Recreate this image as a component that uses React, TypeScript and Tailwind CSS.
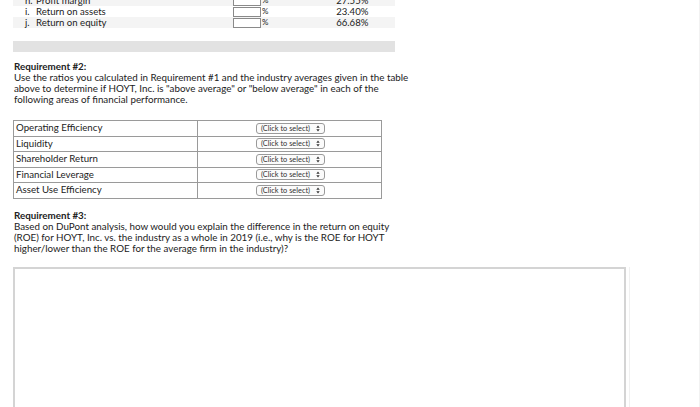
import React from "react";

const topRows = [
  { label: "h.", name: "Profit margin", value: "27.55%", bg: "bg-[#f4f4f4]" },
  { label: "i.", name: "Return on assets", value: "23.40%", bg: "bg-white" },
  { label: "j.", name: "Return on equity", value: "66.68%", bg: "bg-[#f4f4f4]" },
];

const areas = [
  "Operating Efficiency",
  "Liquidity",
  "Shareholder Return",
  "Financial Leverage",
  "Asset Use Efficiency",
];

function SelectBox() {
  return (
    <div className="flex h-[11px] w-[69px] items-center rounded-[3px] border border-[#9a9a9a] bg-[#fbfbfb] pl-[4px] pr-[4px] text-[7.4px] leading-none text-[#333]">
      <span className="flex-1">(Click to select)</span>
      <svg width="4" height="7" viewBox="0 0 4 7">
        <path d="M0.3 2.8 L2 0.6 L3.7 2.8 Z" fill="#333" />
        <path d="M0.3 4.2 L2 6.4 L3.7 4.2 Z" fill="#333" />
      </svg>
    </div>
  );
}

export default function App() {
  return (
    <div
      className="relative h-[407px] w-[700px] overflow-hidden bg-white text-[#222]"
      style={{ fontFamily: "Lato, 'Open Sans', sans-serif" }}
    >
      <div className="mt-[-5px] ml-[13px] w-[382px] text-[9.6px] leading-[11px]">
        {topRows.map((r) => (
          <div key={r.label} className={`flex h-[11px] items-center ${r.bg}`}>
            <span className="ml-[12px] w-[11px]">{r.label}</span>
            <span className="w-[197px]">{r.name}</span>
            <span className="flex items-center">
              <span className="h-[10px] w-[28px] border border-[#8a8a8a] bg-white" />
              <span className="ml-[1px] text-[8px]">%</span>
            </span>
            <span className="w-[100px] text-right">{r.value}</span>
          </div>
        ))}
      </div>

      <div className="mt-[13px] ml-[13px] h-[11px] w-[382px] bg-[#e2e2e2]" />

      <div className="mt-[9px] ml-[14px] w-[430px] text-[9.8px] leading-[11px]">
        <div className="font-bold">Requirement #2:</div>
        <div>
          Use the ratios you calculated in Requirement #1 and the industry averages given in the table
          <br />
          above to determine if HOYT, Inc. is "above average" or "below average" in each of the
          <br />
          following areas of financial performance.
        </div>
      </div>

      <table className="mt-[15px] ml-[13px] w-[369px] border-collapse border border-[#9a9a9a] text-[9.7px]">
        <tbody>
          {areas.map((a) => (
            <tr key={a} className="h-[15.5px]">
              <td className="w-[184px] border border-[#9a9a9a] pl-[2px] leading-none">{a}</td>
              <td className="border border-[#9a9a9a]">
                <div className="flex justify-center pl-[2px]">
                  <SelectBox />
                </div>
              </td>
            </tr>
          ))}
        </tbody>
      </table>

      <div className="mt-[11px] ml-[14px] w-[430px] text-[9.8px] leading-[11px]">
        <div className="font-bold">Requirement #3:</div>
        <div>
          Based on DuPont analysis, how would you explain the difference in the return on equity
          <br />
          (ROE) for HOYT, Inc. vs. the industry as a whole in 2019 (i.e., why is the ROE for HOYT
          <br />
          higher/lower than the ROE for the average firm in the industry)?
        </div>
      </div>

      <div className="mt-[13px] ml-[13px] flex">
        <div className="h-[160px] w-[613px] border-2 border-b-0 border-[#d4d4d4]" />
        <div className="ml-[3px] h-[160px] w-px bg-[#f0f0f0]" />
      </div>

      <div className="absolute top-0 right-0 h-full w-px bg-[#f2f2f2]" />
    </div>
  );
}
